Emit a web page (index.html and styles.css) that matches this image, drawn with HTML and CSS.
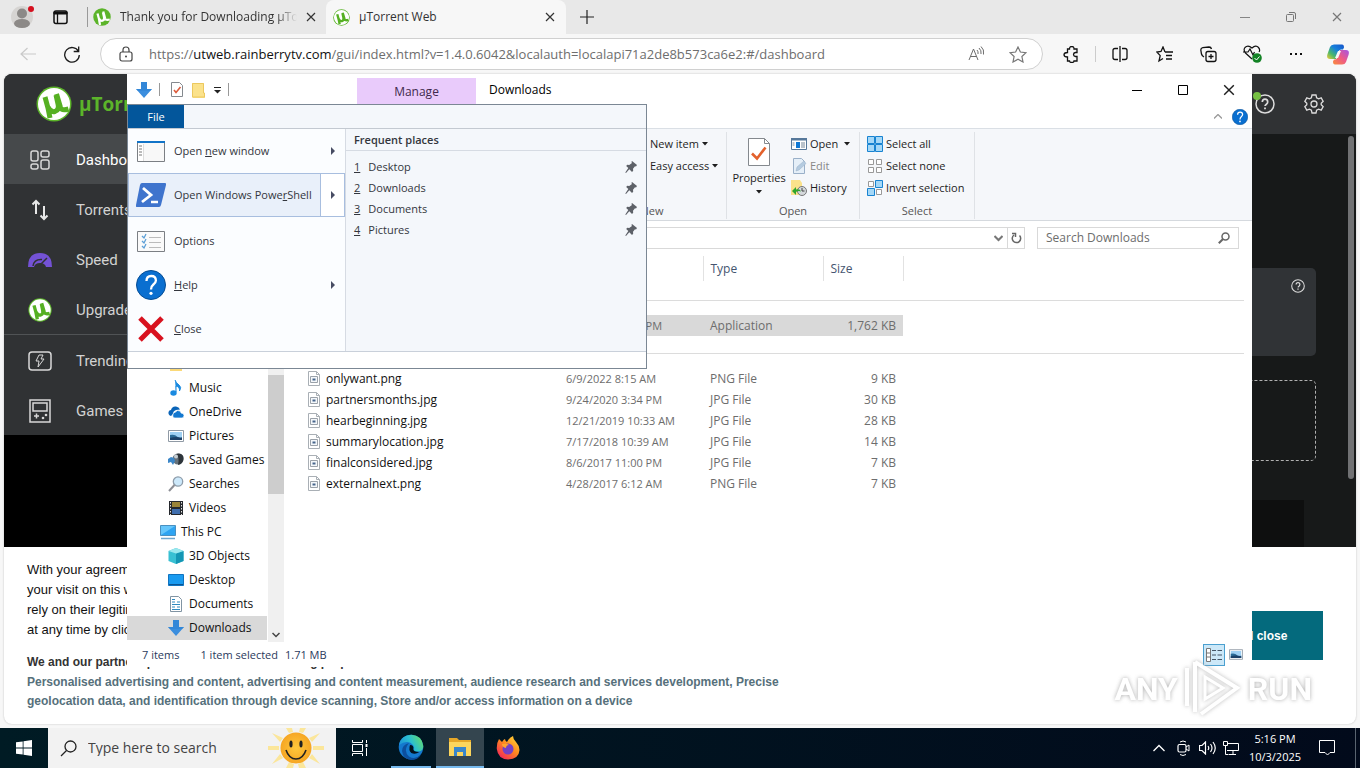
FILE: index.html
```html
<!DOCTYPE html>
<html lang="en">
<head>
<meta charset="utf-8">
<title>Downloads</title>
<link rel="stylesheet" href="styles.css">
</head>
<body>
<svg class="defs" aria-hidden="true">
  <symbol id="ut" viewBox="0 0 36 36"><circle cx="18" cy="18" r="17.500" fill="#5cb42a"/><circle cx="18" cy="18" r="16" fill="#fff"/><path d="M9 11l3 11 2 10M12 21q2.500 5.500 7 4.500 4.500-1.500 3-7.500l-2-9M20.500 8l4 13.500q1.200 3.500 8 1.500" fill="none" stroke="#55b022" stroke-width="5"/></symbol>
  <symbol id="utg" viewBox="0 0 36 36"><circle cx="18" cy="18" r="17.500" fill="#5cb42a"/><path d="M9 11l3 11 2 12M12 21q2.500 5.500 7 4.500 4.500-1.500 3-7.500l-2-9M20.500 7l4 14.500q1.200 3.500 9 1.500" fill="none" stroke="#fff" stroke-width="4.500"/></symbol>
  <symbol id="tabx" viewBox="0 0 10 10"><path d="M1 1l8 8M9 1L1 9" stroke="currentColor" stroke-width="1.200" fill="none"/></symbol>
  <symbol id="down" viewBox="0 0 16 16"><path d="M5 0h6v7h5l-8 9-8-9h5z" fill="#3b8ede"/><path d="M5 0h6v7h5l-2 2H2L0 7h5z" fill="#2f82d4" opacity=".6"/></symbol>
  <symbol id="pin" viewBox="0 0 12 12"><path d="M7 0l5 4-1 1.500-1-.3-2 2.600.2 2L7 11 4.300 8.300 1 12l-.7-.6L3.300 7 1.200 5l1-1.200 2 .1 2.800-2-.6-.9z" fill="#5d6168"/></symbol>
  <symbol id="q" viewBox="0 0 20 20"><circle cx="10" cy="10" r="9" fill="none" stroke="currentColor" stroke-width="1.500"/><path d="M7.300 8q0-2.800 2.700-2.800T12.700 8q0 1.300-1.300 2.200T10 12" fill="none" stroke="currentColor" stroke-width="1.700"/><path d="M9.100 13.500h1.800v1.700H9.100z" fill="currentColor"/></symbol>
  <symbol id="qb" viewBox="0 0 30 30"><circle cx="15" cy="15" r="14.500" fill="#0a6fd0" stroke="#064d94"/><path d="M10.500 11q0-5 4.700-5t4.700 4.500q0 2-2.500 4t-2.400 5" fill="none" stroke="#fff" stroke-width="2.300"/><circle cx="15" cy="23.300" r="1.600" fill="#fff"/></symbol>
  <symbol id="img" viewBox="0 0 12 15"><path d="M.5.5h8l3 3v11H.5z" fill="#fff" stroke="#a9afb5"/><path d="M8.500.5v3h3" fill="none" stroke="#a9afb5"/><path d="M2.500 5.500h7v6h-7z" fill="#f4f7fa" stroke="#9aa1a9"/><path d="M4.500 7.500h3v2h-3z" fill="#47658c"/></symbol>
  <symbol id="caret" viewBox="0 0 6 4"><path d="M0 0h6L3 3.500z" fill="currentColor"/></symbol>
  <symbol id="more" viewBox="0 0 4 8"><path d="M0 0l4 4-4 4z" fill="#474c63"/></symbol>
  <symbol id="pic" viewBox="0 0 16 12"><path d="M.5.5h15v11H.5z" fill="#fff" stroke="#909aa5"/><path d="M2 2h12v8H2z" fill="#9fd0f3"/><path d="M2 5q5-1 7 1.500T14 7v3H2z" fill="#2c6b96"/><path d="M2 8q6-2 12 0v2H2z" fill="#1d4168"/></symbol>
</svg>

<div class="desktop">
<div class="browser">
  <header class="tabstrip">
    <button class="profile" aria-label="Profile"><svg width="24" height="24" viewBox="0 0 24 24"><circle cx="11" cy="12" r="11" fill="#d6d4d2"/><circle cx="11" cy="8.500" r="5" fill="#8c8987"/><ellipse cx="11" cy="18.500" rx="8" ry="4.500" fill="#8c8987"/><circle cx="20" cy="4" r="3" fill="#d5101f"/></svg></button>
    <button class="spaces" aria-label="Tab actions"><svg width="16" height="15" viewBox="0 0 16 15"><rect x="1" y="1" width="13" height="12.500" rx="2" fill="none" stroke="#111" stroke-width="1.500"/><path d="M1 2h13v2H1z" fill="#111" stroke="#111"/><path d="M4.500 4v9" stroke="#111" stroke-width="1.300"/></svg></button>
    <div class="tab"><svg width="18" height="18"><use href="#utg"/></svg><span class="tab-title fade">Thank you for Downloading µTorrent</span><button class="x" aria-label="Close tab"><svg width="10" height="10"><use href="#tabx"/></svg></button></div>
    <div class="tab active"><svg width="17" height="17"><use href="#ut"/></svg><span class="tab-title">µTorrent Web</span><button class="x" aria-label="Close tab"><svg width="10" height="10"><use href="#tabx"/></svg></button></div>
    <button class="newtab" aria-label="New tab"><svg width="14" height="14" viewBox="0 0 14 14"><path d="M7 0v14M0 7h14" stroke="#222" stroke-width="1.200"/></svg></button>
    <div class="wincontrols">
      <button aria-label="Minimize"><svg width="10" height="10" viewBox="0 0 10 10"><path d="M0 5.500h10" stroke="#858585"/></svg></button>
      <button aria-label="Restore"><svg width="10" height="10" viewBox="0 0 10 10"><rect x=".5" y="2.500" width="7" height="7" rx="1" fill="none" stroke="#777"/><path d="M3 .5h5q1.500 0 1.500 1.500v5" fill="none" stroke="#777"/></svg></button>
      <button aria-label="Close"><svg width="10" height="10"><use href="#tabx"/></svg></button>
    </div>
  </header>
  <div class="toolbar">
    <button class="back" aria-label="Back"><svg width="16" height="14" viewBox="0 0 16 14"><path d="M16 7H1M7.500 1L1 7l6.500 6" fill="none" stroke="#c9c9c9" stroke-width="1.200"/></svg></button>
    <button class="reload" aria-label="Refresh"><svg width="18" height="18" viewBox="0 0 18 18"><path d="M15.500 6.500A7.300 7.300 0 1 0 16.300 10M15.700 1.500v5h-5" fill="none" stroke="#1b1b1b" stroke-width="1.300"/></svg></button>
    <div class="urlbar">
      <svg width="14" height="16" viewBox="0 0 14 16"><rect x="1" y="6" width="12" height="9" rx="2" fill="none" stroke="#444" stroke-width="1.200"/><path d="M4 6V4q0-3 3-3t3 3v2" fill="none" stroke="#444" stroke-width="1.200"/><circle cx="7" cy="10.500" r="1" fill="#444"/></svg>
      <span class="url">https://<b>utweb.rainberrytv.com</b>/gui/index.html?v=1.4.0.6042&amp;localauth=localapi71a2de8b573ca6e2:#/dashboard</span>
      <button aria-label="Read aloud"><svg width="17" height="16" viewBox="0 0 17 16"><path d="M1 14L5.500 3 10 14M2.500 10.500h6M9 4q1.500 1.500 1 4M11 2q2.700 2.500 2 6M13 .5q3.500 3 2.500 8" fill="none" stroke="#6d6d6d"/></svg></button>
      <button aria-label="Favorite"><svg width="18" height="17" viewBox="0 0 18 17"><path d="M9 1l2.400 5 5.600.7-4.100 3.800L14 16l-5-2.700L4 16l1.100-5.500L1 6.700 6.600 6z" fill="none" stroke="#777" stroke-width="1.200"/></svg></button>
    </div>
    <div class="actions">
      <button aria-label="Extensions"><svg width="16" height="17" viewBox="0 0 16 17"><path d="M4.500 3h2q0-2.500 2.300-2.500T11 3h3v3.500h-1.500q-2 .3-2 2t2 2H14V15h-3q0 1.500-2.200 1.500T6.500 15h-2v-4Q1 11 1 8.800T4.500 6.500z" fill="none" stroke="#111" stroke-width="1.300"/></svg></button>
      <span class="vr"></span>
      <button aria-label="Split screen"><svg width="16" height="16" viewBox="0 0 16 16"><path d="M8 0v16M6 2.500H3Q1 2.500 1 4.500v7q0 2 2 2h3M10 2.500h3q2 0 2 2v7q0 2-2 2h-3" fill="none" stroke="#111" stroke-width="1.300"/></svg></button>
      <button aria-label="Favorites"><svg width="17" height="17" viewBox="0 0 17 17"><path d="M9 6L7 1 5 5.500.8 6l3.400 3.600L3 15l4-2.500M9 6h8M10 9.500h6M10 13h6" fill="none" stroke="#111" stroke-width="1.300"/></svg></button>
      <button aria-label="Collections"><svg width="17" height="17" viewBox="0 0 17 17"><rect x="6" y="5.500" width="10" height="10" rx="2" fill="none" stroke="#111" stroke-width="1.300"/><path d="M11 8v5M8.500 10.500h5M4 11q-2-1-2.500-3L.8 4q0-2 2-2.300L9 1q2 0 2.500 2" fill="none" stroke="#111" stroke-width="1.300"/></svg></button>
      <button aria-label="Browser essentials"><svg width="19" height="18" viewBox="0 0 19 18"><path d="M9 14L2.500 8Q0 5 2 2.500 5-.5 9 3q4-3.500 6.500-.5 2 2.500.5 4.500M0 7h5l2-3 3 6 1.500-3" fill="none" stroke="#111" stroke-width="1.200"/><circle cx="14" cy="13" r="4.800" fill="#138325"/><path d="M11.500 13l2 2 3-3.500" fill="none" stroke="#fff"/></svg></button>
      <button aria-label="Settings and more"><svg width="14" height="4" viewBox="0 0 14 4"><path d="M1 1h2v2H1zM6 1h2v2H6zM11 1h2v2h-2z" fill="#111"/></svg></button>
      <button class="copilot" aria-label="Copilot"><svg width="22" height="21" viewBox="0 0 22 21"><defs><linearGradient id="cp1" x1="0" y1="1" x2="1" y2="0"><stop offset="0" stop-color="#f3ca34"/><stop offset=".3" stop-color="#4bb86b"/><stop offset=".6" stop-color="#1680dc"/><stop offset="1" stop-color="#1754c9"/></linearGradient><linearGradient id="cp2" x1="0" y1="1" x2="1" y2="0"><stop offset="0" stop-color="#f98c3a"/><stop offset=".5" stop-color="#ee5a86"/><stop offset="1" stop-color="#a355e7"/></linearGradient></defs><path d="M7 .5h8q2 0 2 3l-1 2h-2q-2 0-3 3L9 15H3q-4 0-2.500-5L3 3Q4 .5 7 .5z" fill="url(#cp1)"/><path d="M15 20.500H8q-2 0-2-3l1-2h1q2 0 3-3L13 6h6q4 0 2.500 5L19 18q-1 2.500-4 2.500z" fill="url(#cp2)"/><path d="M11 7h3l-3 7H8z" fill="#f7f7f7"/></svg></button>
    </div>
  </div>

  <main class="page">
    <div class="app">
      <div class="app-head">
        <svg width="36" height="36"><use href="#ut"/></svg><span class="brand">µTorrent</span>
        <span class="head-icons">
          <button class="helpdot" aria-label="Help"><svg width="20" height="20"><use href="#q"/></svg></button>
          <button aria-label="Settings"><svg width="20" height="20" viewBox="0 0 20 20"><path d="M8 1h4l.6 2.700 2 1.100 2.600-.9 2 3.400-2 1.900v1.600l2 1.900-2 3.400-2.600-.9-2 1.100L12 19H8l-.6-2.700-2-1.100-2.600.9-2-3.400 2-1.900V9.200l-2-1.900 2-3.400 2.600.9 2-1.100z" fill="none" stroke="#dcdcdc" stroke-width="1.300"/><circle cx="10" cy="10" r="3" fill="none" stroke="#dcdcdc" stroke-width="1.300"/></svg></button>
        </span>
      </div>
      <div class="app-body">
        <div class="side-col">
        <nav class="side">
          <a href="#dashboard" class="on"><svg width="24" height="22" viewBox="0 0 24 22"><g fill="none" stroke="#d8d8d8" stroke-width="1.500"><rect x="3" y="2" width="7" height="10" rx="2"/><rect x="13" y="2" width="8" height="6" rx="2"/><rect x="3" y="15" width="7" height="5" rx="2"/><rect x="13" y="11" width="8" height="9" rx="2"/></g></svg>Dashboard</a>
          <a href="#torrents"><svg width="24" height="22" viewBox="0 0 24 22"><path d="M8 15V2M4.500 5.500L8 2l3.500 3.500M16 7v13M12.500 16.500L16 20l3.500-3.500" fill="none" stroke="#e8e8e8" stroke-width="2"/></svg>Torrents</a>
          <a href="#speed"><svg width="24" height="22" viewBox="0 0 24 22"><path d="M0 18q0-14 12-14t12 14h-6q-1-4-6-4t-6 4z" fill="#7452d6"/><path d="M11 17l8-8M5 17q1-7 9-6.500" fill="none" stroke="#303234" stroke-width="1.500"/></svg>Speed</a>
          <a href="#upgrade"><svg width="24" height="24"><use href="#ut"/></svg>Upgrade</a>
          <a href="#trending" class="ruled"><svg width="24" height="22" viewBox="0 0 24 22"><rect x="1" y="2" width="22" height="18" rx="3" fill="none" stroke="#d8d8d8" stroke-width="1.500"/><path d="M11 5h4l-2 4h3l-6 8 1-6H8z" fill="none" stroke="#d8d8d8"/></svg>Trending</a>
          <a href="#games"><svg width="24" height="24" viewBox="0 0 24 24"><path d="M2 1h20v22H2zM5 4h14v8H5zM6 17h5M8.500 14.500v5" fill="none" stroke="#d8d8d8" stroke-width="1.500"/><circle cx="15" cy="19" r="1.300" fill="#d8d8d8"/><circle cx="18" cy="16" r="1.300" fill="#d8d8d8"/></svg>Games</a>
        </nav>
        </div>
        <div class="dash">
          <section class="card"><button aria-label="Info"><svg width="14" height="14"><use href="#q"/></svg></button></section>
          <section class="drop"></section>
          <section class="ad"></section>
          <div class="thumb"></div>
        </div>
      </div>
    </div>
    <section class="consent">
      <div class="consent-text">
        <p class="intro">With your agreement,<br>your visit on this website,<br>rely on their legitimate<br>at any time by clicking</p>
        <strong>We and our partners process data for the following purposes:</strong>
        <p class="purposes">Personalised advertising and content, advertising and content measurement, audience research and services development, Precise geolocation data, and identification through device scanning, Store and/or access information on a device</p>
      </div>
      <button class="agree">Agree and close</button>
    </section>
  </main>
</div>

<div class="explorer">
  <div class="ex-title">
    <div class="quick">
      <svg width="16" height="16"><use href="#down"/></svg><i></i>
      <button aria-label="Properties"><svg width="12" height="15" viewBox="0 0 12 15"><path d="M.5.500h8l3 3v11H.5z" fill="#fff" stroke="#84898e"/><path d="M3 8l2 2.500L9.500 5" fill="none" stroke="#dc5b3b" stroke-width="1.600"/></svg></button>
      <button aria-label="New folder"><svg width="13" height="16" viewBox="0 0 13 16"><path d="M0 1h12v10l1 1v4H1l-1-1z" fill="#fbe28b"/><path d="M.5 1.500h11v9.500h1v4h-12z" fill="none" stroke="#ecc85e"/></svg></button>
      <button aria-label="Customize"><svg width="7" height="8" viewBox="0 0 7 8"><path d="M0 1.500h7" stroke="#222"/><path d="M0 4h7L3.500 7.500z" fill="#222"/></svg></button><i></i>
    </div>
    <div class="manage">Manage</div>
    <div class="ex-name">Downloads</div>
    <div class="ex-controls">
      <button aria-label="Minimize"><svg width="10" height="10" viewBox="0 0 10 10"><path d="M0 5.500h10" stroke="#000"/></svg></button>
      <button aria-label="Maximize"><svg width="10" height="10" viewBox="0 0 10 10"><path d="M.5.500h9v9h-9z" fill="none" stroke="#000"/></svg></button>
      <button aria-label="Close"><svg width="12" height="12"><use href="#tabx"/></svg></button>
    </div>
  </div>
  <div class="ex-tabs">
    <button aria-label="Collapse ribbon"><svg width="8" height="5" viewBox="0 0 8 5"><path d="M0 4.500l4-4 4 4" fill="none" stroke="#999" stroke-width="1.300"/></svg></button>
    <button aria-label="Help"><svg width="16" height="16"><use href="#qb"/></svg></button>
  </div>
  <div class="ribbon">
    <div class="group new">
      <div class="cmds stack">
        <button>New item <svg width="6" height="4"><use href="#caret"/></svg></button>
        <button>Easy access <svg width="6" height="4"><use href="#caret"/></svg></button>
      </div>
      <span class="gname">New</span>
    </div>
    <div class="group open">
      <div class="cmds">
        <button class="big"><svg width="22" height="28" viewBox="0 0 22 28"><path d="M.5.500h16l5 5v22H.5z" fill="#fff" stroke="#84898e"/><path d="M16.500.5v5h5" fill="none" stroke="#84898e"/><path d="M4 15.500l5 5 8.500-11" fill="none" stroke="#e3612c" stroke-width="2.600"/></svg>Properties<svg width="6" height="4"><use href="#caret"/></svg></button>
        <div class="stack">
          <button><svg width="16" height="12" viewBox="0 0 16 12"><path d="M.5.500h15v11H.5z" fill="#fff" stroke="#56789a"/><path d="M0 0h16v2.500H0z" fill="#56789a"/><path d="M5 4h4v6H5z" fill="#0f78d4"/><path d="M10 5h4M10 7h4M10 9h4M1.500 5h2M1.500 7h2" stroke="#789"/></svg>Open <svg class="push" width="6" height="4"><use href="#caret"/></svg></button>
          <button class="off"><svg width="16" height="16" viewBox="0 0 16 16"><path d="M2.500.5h8l3 3v12h-11z" fill="#e5eff8" stroke="#9ab0c8"/><path d="M5 13l1-4 7-6 2 2.500-7 6.500z" fill="#b4cbe0" stroke="#9ab0c8" stroke-width=".5"/></svg>Edit</button>
          <button><svg width="16" height="16" viewBox="0 0 16 16"><path d="M0 0h9l2 3v12H0z" fill="#fbe28b"/><circle cx="11" cy="11" r="4.500" fill="#d5d9dc" stroke="#777"/><path d="M11 8v3h2.500" fill="none" stroke="#444"/><path d="M1 11l4-4v2.500q4-1 5 2-3-1-5 .5V15z" fill="#2fa52c"/></svg>History</button>
        </div>
      </div>
      <span class="gname">Open</span>
    </div>
    <div class="group select">
      <div class="cmds stack">
        <button><svg width="16" height="16" viewBox="0 0 16 16"><path d="M.5.500h7v7h-7zM8.500.500h7v7h-7zM.5 8.500h7v7h-7zM8.500 8.500h7v7h-7z" fill="#a5d8f7" stroke="#1883d1"/></svg>Select all</button>
        <button><svg width="16" height="16" viewBox="0 0 16 16"><path d="M1.500 1.500h5v5h-5zM9.500 1.500h5v5h-5zM1.500 9.500h5v5h-5zM9.500 9.500h5v5h-5z" fill="#fff" stroke="#999"/></svg>Select none</button>
        <button><svg width="16" height="16" viewBox="0 0 16 16"><path d="M1.500 1.500h5v5h-5zM9.500 9.500h5v5h-5z" fill="#fff" stroke="#999"/><path d="M8.500.500h7v7h-7zM.5 8.500h7v7h-7z" fill="#a5d8f7" stroke="#1883d1"/></svg>Invert selection</button>
      </div>
      <span class="gname">Select</span>
    </div>
  </div>
  <div class="address">
    <div class="path"><button aria-label="Previous locations"><svg width="9" height="7" viewBox="0 0 9 7"><path d="M.5 1l4 4 4-4" fill="none" stroke="#777" stroke-width="2"/></svg></button><button class="refresh" aria-label="Refresh"><svg width="11" height="12" viewBox="0 0 11 12"><path d="M8.500 3.500A4.200 4.200 0 1 1 3 3M1 1.500h3.500V5" fill="none" stroke="#666" stroke-width="1.500"/></svg></button></div>
    <label class="find"><input type="text" placeholder="Search Downloads" aria-label="Search Downloads"><svg width="12" height="12" viewBox="0 0 12 12"><circle cx="7.500" cy="4.500" r="3.500" fill="none" stroke="#666" stroke-width="1.500"/><path d="M5 7L.8 11.300" stroke="#666" stroke-width="2"/></svg></label>
  </div>
  <div class="ex-body">
    <nav class="tree">
      <ul>
        <li><svg width="16" height="14" viewBox="0 0 16 14"><path d="M2 0h12v14H2z" fill="#fbd978"/></svg></li>
        <li><svg width="16" height="16" viewBox="0 0 16 16"><path d="M7 0q1 3 4 5t.5 6q.5-4-3.500-5v6" fill="#1a8ae0" stroke="#1a8ae0"/><ellipse cx="5.500" cy="13" rx="3.200" ry="2.700" fill="#1a8ae0"/></svg>Music</li>
        <li><svg width="16" height="16" viewBox="0 0 16 16"><path d="M3 12q-3-1-2.500-4Q1 6 3 6q1-4 5-3.500 3 .5 4 3L8 6q-3 1-3 4z" fill="#0a64b8"/><path d="M5 13q-1-4 2.500-5Q9 5.500 12 7q1 1 1 2 3 0 3 2.500T14 14H7q-2 0-2-1z" fill="#1378d0" stroke="#fff" stroke-width=".7"/></svg>OneDrive</li>
        <li><svg width="16" height="12"><use href="#pic"/></svg>Pictures</li>
        <li><svg width="16" height="16" viewBox="0 0 16 16"><circle cx="10" cy="7" r="5.500" fill="#66727b"/><path d="M8 2q4 3 2 11 5-1 5.500-6T11 1.500z" fill="#2e353b"/><path d="M0 7l3-2 3 1 1 3-2 4-2-3-3 1z" fill="#3c87c8"/><circle cx="8" cy="4.500" r="2" fill="#c7cfd5"/></svg>Saved Games</li>
        <li><svg width="16" height="16" viewBox="0 0 16 16"><circle cx="10" cy="5.500" r="4.700" fill="#cde9fb" stroke="#8e9dab" stroke-width="1.300"/><path d="M6.500 9L1 15" stroke="#8d8f96" stroke-width="2"/></svg>Searches</li>
        <li><svg width="16" height="16" viewBox="0 0 16 16"><path d="M1 1h14v14H1z" fill="#25282d"/><path d="M4 2h8v5H4z" fill="#9a8438"/><path d="M4 9h8v5H4z" fill="#3f6eae"/><path d="M2.500 2v13M13.500 2v13" stroke="#e3e3e3" stroke-dasharray="1.500 1.500"/></svg>Videos</li>
        <li class="root"><svg width="16" height="16" viewBox="0 0 16 16"><path d="M.5 1.500h15v10H.5z" fill="#2ea4f2" stroke="#4a90c0"/><path d="M1 2h14L1 11z" fill="#66c6fb"/><path d="M1 14.500h14" stroke="#6fa7cf" stroke-width="1.500"/></svg>This PC</li>
        <li><svg width="16" height="16" viewBox="0 0 16 16"><path d="M8 0l7.500 3v10L8 16 .5 13V3z" fill="#38c0d3"/><path d="M8 5.500l7.500-2.500v10L8 16z" fill="#1496b4"/><path d="M8 0l7.500 3L8 5.500.5 3z" fill="#9be8ee"/></svg>3D Objects</li>
        <li><svg width="16" height="14" viewBox="0 0 16 14"><path d="M.5 1.500h15v11H.5z" fill="#1a9bf0" stroke="#1174c0"/><path d="M1 11.500h14" stroke="#0b5594"/></svg>Desktop</li>
        <li><svg width="16" height="16" viewBox="0 0 16 16"><path d="M2.500.5h8l3 3v12h-11z" fill="#fff" stroke="#8194a3"/><path d="M4 3.500h3M4 6h3M9 6h3M4 8.500h8M4 11h3M9 11h3M4 13.500h8" stroke="#2f8abf"/></svg>Documents</li>
        <li class="sel"><svg width="16" height="16"><use href="#down"/></svg>Downloads</li>
      </ul>
      <div class="scroll"><div class="knob"></div><button aria-label="Scroll down"><svg width="8" height="6" viewBox="0 0 8 6"><path d="M.5 1L4 4.500 7.500 1" fill="none" stroke="#444" stroke-width="1.500"/></svg></button></div>
    </nav>
    <div class="list">
      <table>
        <colgroup><col class="c-name"><col class="c-date"><col class="c-type"><col class="c-size"><col></colgroup>
        <thead><tr><th></th><th></th><th>Type</th><th>Size</th><td></td></tr></thead>
        <tbody>
          <tr class="rule"><td colspan="5"><hr></td></tr>
          <tr class="picked"><td></td><td>10/3/2025 5:15 PM</td><td>Application</td><td>1,762 KB</td><td></td></tr>
          <tr class="rule second"><td colspan="5"><hr></td></tr>
          <tr><td><svg width="12" height="15"><use href="#img"/></svg>onlywant.png</td><td>6/9/2022 8:15 AM</td><td>PNG File</td><td>9 KB</td><td></td></tr>
          <tr><td><svg width="12" height="15"><use href="#img"/></svg>partnersmonths.jpg</td><td>9/24/2020 3:34 PM</td><td>JPG File</td><td>30 KB</td><td></td></tr>
          <tr><td><svg width="12" height="15"><use href="#img"/></svg>hearbeginning.jpg</td><td>12/21/2019 10:33 AM</td><td>JPG File</td><td>28 KB</td><td></td></tr>
          <tr><td><svg width="12" height="15"><use href="#img"/></svg>summarylocation.jpg</td><td>7/17/2018 10:39 AM</td><td>JPG File</td><td>14 KB</td><td></td></tr>
          <tr><td><svg width="12" height="15"><use href="#img"/></svg>finalconsidered.jpg</td><td>8/6/2017 11:00 PM</td><td>JPG File</td><td>7 KB</td><td></td></tr>
          <tr><td><svg width="12" height="15"><use href="#img"/></svg>externalnext.png</td><td>4/28/2017 6:12 AM</td><td>PNG File</td><td>7 KB</td><td></td></tr>
        </tbody>
      </table>
    </div>
  </div>
  <footer class="status">
    <span>7 items</span><span>1 item selected</span><span class="size">1.71 MB</span>
    <span class="views"><button class="on" aria-label="Details view"><svg width="16" height="14" viewBox="0 0 16 14"><path d="M.5.500h4v13h-4zM.5 5h4M.5 9h4" fill="#fff" stroke="#777"/><path d="M6 2.500h4M11.500 2.500H16M6 7h4M11.500 7H16M6 11.500h4M11.500 11.500H16" stroke="#456"/></svg></button><button aria-label="Large icons view"><svg width="14" height="11"><use href="#pic"/></svg></button></span>
  </footer>

  <div class="filemenu">
    <div class="fm-tabs"><button>File</button></div>
    <div class="fm-body">
      <div class="fm-left">
        <button><svg width="30" height="30" viewBox="0 0 30 30"><path d="M1.500 5.500h27v20h-27z" fill="#f8f8f8" stroke="#7b7f84"/><path d="M1 5h28v2H1z" fill="#1173c7"/><path d="M2 8h5v17H2z" fill="#fff"/><path d="M3 10h3M3 13h3M3 16h3M3 19h3" stroke="#777"/><path d="M7.500 8v17" stroke="#ddd"/></svg><span>Open <u>n</u>ew window</span><svg class="arr" width="4" height="8"><use href="#more"/></svg></button>
        <button class="hot"><svg width="30" height="30" viewBox="0 0 30 30"><path d="M6 3h23q1.500 0 1 2l-5 20q-.5 2-2 2H1q-1.500 0-1-2L4 5q.5-2 2-2z" fill="#3f74cd"/><path d="M7 8l8 7-9 7" fill="none" stroke="#fff" stroke-width="2.800"/><path d="M15 22h7" stroke="#fff" stroke-width="2.500"/></svg><span>Open Windows Powe<u>r</u>Shell</span><span class="split"><svg width="4" height="8"><use href="#more"/></svg></span></button>
        <button class="gap"><svg width="30" height="30" viewBox="0 0 30 30"><path d="M1.500 5.500h27v20h-27z" fill="#fafafa" stroke="#7b7f84"/><path d="M13 11.500h12M13 16.500h12M13 21.500h12" stroke="#bbb"/><path d="M6 10l2 2 2-4M6 15l2 2 2-4M6 20l2 2 2-4" fill="none" stroke="#5c9fd6" stroke-width="1.300"/></svg><span>Options</span></button>
        <button><svg width="30" height="30"><use href="#qb"/></svg><span><u>H</u>elp</span><svg class="arr" width="4" height="8"><use href="#more"/></svg></button>
        <button><svg width="30" height="30" viewBox="0 0 30 30"><path d="M4 4l22 22M26 4L4 26" stroke="#d8121f" stroke-width="5"/></svg><span><u>C</u>lose</span></button>
      </div>
      <div class="fm-right">
        <h2>Frequent places</h2>
        <ul>
          <li><u>1</u><a href="#desktop">Desktop</a><svg width="12" height="12"><use href="#pin"/></svg></li>
          <li><u>2</u><a href="#downloads">Downloads</a><svg width="12" height="12"><use href="#pin"/></svg></li>
          <li><u>3</u><a href="#documents">Documents</a><svg width="12" height="12"><use href="#pin"/></svg></li>
          <li><u>4</u><a href="#pictures">Pictures</a><svg width="12" height="12"><use href="#pin"/></svg></li>
        </ul>
      </div>
    </div>
    <div class="fm-foot"></div>
  </div>
</div>

<div class="watermark"><span>ANY</span><svg width="60" height="66" viewBox="0 0 60 66"><path d="M4 12v38M12 6v50M12 6l42 26-36 26" fill="none" stroke="#fff" stroke-width="4"/><path d="M22 21v22l18-11z" fill="none" stroke="#fff" stroke-width="3"/></svg><span>RUN</span></div>

<footer class="taskbar">
  <button class="start" aria-label="Start"><svg width="16" height="16" viewBox="0 0 16 16"><path d="M0 2.300L6.700 1.400v6.200H0zM7.500 1.300L16 0v7.600H7.500zM0 8.400h6.700v6.200L0 13.700zM7.500 8.400H16V16l-8.500-1.300z" fill="#fff"/></svg></button>
  <label class="search"><svg width="17" height="17" viewBox="0 0 17 17"><circle cx="10.500" cy="6.500" r="5.500" fill="none" stroke="#222" stroke-width="1.300"/><path d="M6.500 10.500L1 16" stroke="#222" stroke-width="1.300"/></svg><input type="text" placeholder="Type here to search" aria-label="Type here to search">
    <svg width="60" height="40" viewBox="0 0 60 40"><defs><radialGradient id="sun"><stop offset="0" stop-color="#ffc83c"/><stop offset="1" stop-color="#f6a623"/></radialGradient></defs><g fill="#fbe69a"><path d="M2 18h11v4H2zM58 18H47v4h11zM6 5l11 5-3 4zM54 5l-11 5 3 4zM6 36l8-10 3 4zM54 36l-8-10-3 4zM20 0h6l1 4-4 1zM34 0h6l-3 5-4-1zM20 40l3-6 5 2-1 4zM40 40l-3-6-5 2 1 4z"/></g><circle cx="30" cy="20" r="15.500" fill="url(#sun)"/><ellipse cx="25" cy="16" rx="1.600" ry="3.500" fill="#222"/><ellipse cx="35" cy="16" rx="1.600" ry="3.500" fill="#222"/><path d="M20 22q3 9 10 9t10-9" fill="none" stroke="#222" stroke-width="1.600"/></svg></label>
  <button class="item" aria-label="Task view"><svg width="16" height="16" viewBox="0 0 16 16"><path d="M.5 4.500h10v7H.5zM.5 0v2.500h10V0M.5 16v-2.500h10V16M14.500 0v3M14.500 8v8" fill="none" stroke="#fff"/><path d="M13.500 4h2v3h-2z" fill="#fff"/></svg></button>
  <button class="item edge run" aria-label="Microsoft Edge"><svg width="26" height="26" viewBox="0 0 26 26"><defs><linearGradient id="e1" x1="0" y1=".6" x2="1" y2=".2"><stop offset="0" stop-color="#1b8fd8"/><stop offset=".5" stop-color="#2bc0cf"/><stop offset="1" stop-color="#68de66"/></linearGradient></defs><circle cx="13" cy="13" r="12.300" fill="#1479ce"/><path d="M1 11Q3 1 13.500.8 24 1.500 25.300 12q0 5-5 5.500-5 .2-5-2 1.500-2 0-4Q10 5 1 11z" fill="url(#e1)"/><path d="M9 12q-3 6 2 10.500 6 4 12-2-3 5.500-10 5.500Q5 25 4 17q0-6 7-8z" fill="#0c4f9e"/><path d="M12 11q4 0 3.300 4 0 3 6 3-4 3-8 1-3-3-1.300-8z" fill="#02131d"/></svg></button>
  <button class="item run cur" aria-label="File Explorer"><svg width="22" height="18" viewBox="0 0 22 18"><path d="M0 0h8l2 2h12v16H0z" fill="#e6a728"/><path d="M0 4h22v14H0z" fill="#fcd55c"/><path d="M5 9h12v9h-3v-4H8v4H5z" fill="#3a86c9"/></svg></button>
  <button class="item" aria-label="Firefox"><svg width="24" height="24" viewBox="0 0 24 24"><defs><linearGradient id="ff" x1="1" y1="0" x2=".2" y2="1"><stop offset="0" stop-color="#ffe23c"/><stop offset=".5" stop-color="#ff8a1e"/><stop offset="1" stop-color="#f4235c"/></linearGradient></defs><path d="M3 3l3 3q2-3 3-3 0 2 2 3 2-4 6-6 0 3 3 6t3.500 8Q23 23 12 23.500 2 23 .8 13 .5 7 3 3z" fill="url(#ff)"/><circle cx="12" cy="13" r="5.500" fill="#7541c5"/><path d="M6 8q5-1 7 1-3 0-3 3-4-1-4-4z" fill="#ffa52e"/></svg></button>
  <div class="tray">
    <button aria-label="Hidden icons"><svg width="12" height="8" viewBox="0 0 12 8"><path d="M.5 7L6 1.500 11.500 7" fill="none" stroke="#fff" stroke-width="1.300"/></svg></button>
    <button aria-label="Meet now"><svg width="13" height="16" viewBox="0 0 13 16"><rect x="1" y="4.500" width="8" height="7.500" rx="1.500" fill="none" stroke="#fff" stroke-width="1.200"/><path d="M9 7l3-2v6l-3-2M3 2q3-2 6 0M3 14.500q3 2 6 0" fill="none" stroke="#fff"/></svg></button>
    <button aria-label="Volume"><svg width="17" height="14" viewBox="0 0 17 14"><path d="M.5 4.500H3L6.500 1v12L3 9.500H.5zM9 5q1.500 2 0 4M11.500 3q3 4 0 8M14 1q4.500 6 0 12" fill="none" stroke="#fff" stroke-width="1.200"/></svg></button>
    <button aria-label="Network"><svg width="16" height="14" viewBox="0 0 16 14"><path d="M5 2.500h10.500v7H4M10 10v3M6 13.500h7M.5.500h4v4h-4zM2.500 4.500v9h3" fill="none" stroke="#fff"/></svg></button>
    <div class="clock"><span>5:16 PM</span><span>10/3/2025</span></div>
    <button class="note" aria-label="Notifications"><svg width="16" height="16" viewBox="0 0 16 16"><path d="M.5.500h15v12H11L8.500 15 6 12.500H.5z" fill="none" stroke="#fff"/></svg></button>
    <span class="peek"></span>
  </div>
</footer>
</div>
</body>
</html>
```
FILE: styles.css
```css
* { box-sizing: border-box; }
body { margin: 0; font: 12px/16px "Open Sans", "Noto Sans", sans-serif; color: #1e1e1e; }
button { background: none; border: 0; padding: 0; margin: 0; font: inherit; color: inherit; display: flex; align-items: center; justify-content: center; }
input { border: 0; background: none; font: inherit; padding: 0; min-width: 0; outline: 0; }
ul { list-style: none; margin: 0; padding: 0; }
a { color: inherit; text-decoration: none; }
svg { flex: none; display: block; }
.defs { position: absolute; width: 0; height: 0; }

.desktop { height: 100vh; display: flex; flex-direction: column; position: relative; overflow: hidden; }
.browser { flex: 1; min-height: 0; display: flex; flex-direction: column; background: #f7f7f7; }

/* tab strip */
.tabstrip { height: 34px; flex: none; display: flex; align-items: center; background: #e8e8e8; }
.profile { margin-left: 11px; width: 24px; }
.spaces { margin-left: 18px; width: 16px; }
.tab { width: 239px; height: 34px; display: flex; align-items: center; gap: 9px; padding: 0 10px 0 5px; margin-left: 18px; color: #333; }
.tab:not(.active)::before { content: ""; width: 1px; height: 20px; background: #999; margin-right: -4px; margin-left: -5px; }
.tab.active { margin-left: 0; width: 240px; padding: 0 11px 0 7px; background: #f7f7f7; border-radius: 8px 8px 0 0; }
.tab-title { flex: 1; white-space: nowrap; overflow: hidden; }
.fade { -webkit-mask-image: linear-gradient(90deg, #000 88%, transparent); mask-image: linear-gradient(90deg, #000 88%, transparent); }
.newtab { width: 42px; height: 34px; }
.wincontrols { margin-left: auto; display: flex; color: #777; }
.wincontrols button { width: 46px; height: 34px; }

/* address bar */
.toolbar { height: 40px; flex: none; display: flex; align-items: center; padding: 0 2px 0 20px; }
.reload { margin: 0 19px 0 27px; }
.urlbar { flex: 1; height: 32px; border: 1px solid #d0d0d0; border-radius: 16px; background: #fff; display: flex; align-items: center; padding: 0 15px 0 18px; gap: 24px; }
.url { flex: 1; margin-left: -8px; font-size: 13px; line-height: 20px; color: #6e6e6e; white-space: nowrap; overflow: hidden; }
.url b { font-weight: 400; color: #111; }
.actions { display: flex; align-items: center; margin-left: 6px; }
.actions button { width: 44px; height: 32px; }
.actions .copilot { width: 40px; }
.vr { width: 1px; height: 16px; margin: 0 2px; background: #ccc; }

/* web page */
.page { flex: 1; min-height: 0; margin: 0 4px 4px; border-radius: 8px; overflow: hidden; background: #fff; display: flex; flex-direction: column; box-shadow: 0 0 2px #bbb; }
.app { flex: 1; min-height: 0; display: flex; flex-direction: column; background: #171919; }
.app-head { height: 60px; flex: none; background: #303234; display: flex; align-items: center; padding: 0 32px; gap: 7px; color: #dcdcdc; }
.brand { font: bold 19px/28px "Open Sans", sans-serif; color: #5cb42a; }
.head-icons { margin-left: auto; display: flex; gap: 29px; }
.helpdot { position: relative; }
.helpdot::before { content: ""; position: absolute; left: -2px; top: -2px; width: 8px; height: 8px; border-radius: 50%; background: #76c043; }
.app-body { flex: 1; min-height: 0; display: flex; }
.side-col { width: 200px; flex: none; background: #000; }
.side { background: #303234; }
.side a { height: 50px; display: flex; align-items: center; gap: 24px; padding: 1px 0 0 24px; font: 15px/20px Roboto, sans-serif; color: #d2d2d2; }
.side a.on { background: #46494b; color: #fff; }
.side a.ruled { height: 51px; border-top: 1px solid #505355; }
.dash { flex: 1; position: relative; padding: 134px 40px 0; display: flex; flex-direction: column; }
.card { height: 88px; flex: none; background: #303336; border-radius: 5px; display: flex; justify-content: flex-end; align-items: flex-start; padding: 11px; color: #dcdcdc; }
.drop { height: 81px; flex: none; margin-top: 24px; border: 1px dashed #b0b0b0; border-radius: 5px; }
.ad { flex: 1; margin: 39px 12px 0; background: #0e0f0f; }
.thumb { position: absolute; right: 2px; top: 2px; width: 6px; height: 343px; border-radius: 3px; background: #707173; }
.consent { flex: none; display: flex; align-items: center; justify-content: space-between; padding: 13px 33px 13px 23px; font: 12px/20px "Liberation Sans", Arial, sans-serif; color: #111; }
.consent-text { width: 770px; }
.consent p { margin: 0; }
.consent .intro { font-size: 13px; }
.consent strong { display: block; margin-top: 12px; color: #333; }
.consent .purposes { margin-top: 1px; font-weight: bold; line-height: 19px; color: #56707b; }
.agree { width: 164px; height: 49px; background: #046a7d; color: #fff; font-weight: bold; }

/* explorer window */
.explorer { position: absolute; inset: 74px 108px 101px 127px; background: #fff; display: flex; flex-direction: column; overflow: hidden; }
.ex-title { height: 31px; flex: none; display: flex; align-items: center; }
.quick { width: 230px; display: flex; align-items: center; gap: 9px; padding-left: 9px; }
.quick i { width: 1px; height: 13px; background: #999; margin: 0 2px 0 -2px; }
.manage { width: 119px; height: 27px; align-self: flex-end; background: #e9cbfb; text-align: center; line-height: 27px; color: #3f2a4c; }
.ex-name { margin-left: 13px; color: #000; }
.ex-controls { margin-left: auto; display: flex; }
.ex-controls button { width: 46px; height: 30px; }
.ex-tabs { height: 23px; flex: none; display: flex; align-items: center; justify-content: flex-end; gap: 10px; padding-right: 4px; }
.ribbon { height: 93px; flex: none; border-top: 1px solid #dadfe5; border-bottom: 1px solid #d5d9de; background: #f5f7fa; display: flex; padding-left: 451px; font-size: 11px; }
.group { display: flex; flex-direction: column; margin: 3px 0 1px; padding-top: 1px; border-right: 1px solid #dfe2e6; align-items: center; justify-content: space-between; }
.gname { color: #555; }
.cmds { display: flex; align-items: flex-start; }
.stack { display: flex; flex-direction: column; align-items: flex-start; }
.stack button { height: 22px; gap: 3px; white-space: nowrap; }
.group.new { width: 149px; }
.new .cmds { align-self: flex-end; width: 76px; }
.group.open { width: 133px; }
.open .cmds { align-self: stretch; gap: 4px; padding-left: 4px; }
.big { flex-direction: column; gap: 4px; padding-top: 5px; width: 56px; }
.push { margin-left: 3px; }
.off { color: #888; }
.group.select { width: 115px; }
.select .cmds { align-self: stretch; padding-left: 7px; }
.address { height: 33px; flex: none; display: flex; align-items: center; gap: 12px; padding: 1px 13px 0 100px; }
.path { flex: 1; height: 22px; border: 1px solid #d9d9d9; display: flex; justify-content: flex-end; }
.path button { width: 17px; }
.path .refresh { border-left: 1px solid #d9d9d9; }
.find { width: 202px; height: 22px; border: 1px solid #d9d9d9; display: flex; align-items: center; padding: 0 8px; }
.find input { flex: 1; }
.find input::placeholder { color: #6d6d6d; opacity: 1; }
.ex-body { flex: 1; min-height: 0; display: flex; }
.tree { width: 157px; flex: none; display: flex; align-items: flex-end; justify-content: space-between; }
.tree ul { width: 140px; padding-bottom: 2px; }
.tree li { height: 24px; display: flex; align-items: center; gap: 5px; padding-left: 41px; color: #111; white-space: nowrap; }
.tree li.root { padding-left: 33px; }
.tree li.sel { background: #d9d9d9; }
.scroll { width: 16px; height: 274px; background: #f0f0f0; display: flex; flex-direction: column; justify-content: space-between; }
.knob { height: 126px; border-top: 7px solid #f0f0f0; background: #cdcdcd; }
.scroll button { height: 15px; }
.list { flex: 1; padding: 2px 8px 0 16px; }
table { width: 100%; table-layout: fixed; border-collapse: collapse; color: #6d6d6d; }
.c-name { width: 259px; }
.c-date { width: 144px; }
.c-type { width: 120px; }
.c-size { width: 80px; }
th, td { padding: 0 0 0 7px; height: 21px; text-align: left; white-space: nowrap; }
th { height: 25px; font-weight: 400; color: #44546f; border-right: 1px solid #e2e2e2; }
td:first-child { padding-left: 8px; color: #111; }
tbody td:nth-child(2) { font-size: 11px; }
tbody td:nth-child(4) { text-align: right; padding-right: 7px; }
td svg { display: inline-block; vertical-align: -3px; margin-right: 6px; }
.rule td { height: 34px; padding: 0; }
.rule.second td { height: 32px; }
.rule hr { border: 0; border-top: 1px solid #dcdcdc; margin: 4px 0 0; }
.rule.second hr { margin: 2px 0 0; }
.picked td:nth-child(-n+4) { background: #d9d9d9; }
.status { height: 25px; flex: none; display: flex; align-items: center; padding: 0 5px 0 15px; gap: 21px; font-size: 11px; color: #2b3a5c; }
.status .size { margin-left: -14px; }
.views { margin-left: auto; display: flex; }
.views button { width: 22px; height: 22px; }
.views .on { background: #cce8f8; border: 1px solid #4ba0d0; }

/* file menu */
.filemenu { position: absolute; left: 0; top: 30px; width: 520px; border: 1px solid #7b8794; background: #fff; color: #33363d; font-size: 11px; }
.fm-tabs { height: 24px; background: #f4f7fb; border-bottom: 1px solid #c3c9d1; display: flex; }
.fm-tabs button { width: 56px; background: #03569b; color: #fff; }
.fm-body { display: flex; }
.fm-left { width: 218px; background: #fbfdff; border-right: 1px solid #d6dbe3; }
.fm-left button { width: 217px; height: 44px; justify-content: flex-start; gap: 8px; padding: 0 9px 0 7px; white-space: nowrap; border: 1px solid transparent; }
.fm-left .arr { margin-left: auto; }
.fm-left .hot { background: #e9f0fa; border-color: #a8bedf; padding-right: 0; }
.split { margin-left: auto; width: 24px; flex: none; align-self: stretch; border-left: 1px solid #a8bedf; background: #fff; display: flex; align-items: center; justify-content: center; }
.fm-left .gap { margin-top: 2px; }
.fm-right { flex: 1; background: #f4f7fb; }
.fm-right h2 { margin: 0; height: 22px; padding-left: 8px; border-bottom: 1px solid #d6dbe3; font-size: 11px; line-height: 22px; font-weight: 600; }
.fm-right ul { padding: 5px 9px 0 8px; }
.fm-right li { display: flex; align-items: center; height: 21px; gap: 8px; }
.fm-right li svg { margin-left: auto; }
.fm-foot { height: 17px; border-top: 1px solid #c9d0da; }

.watermark { position: absolute; right: 48px; bottom: 46px; display: flex; align-items: center; gap: 5px; opacity: .8; font: bold 32px/40px Roboto, sans-serif; color: #fff; text-shadow: 0 0 4px #999; }
.watermark svg { filter: drop-shadow(0 0 2px #aaa); }

/* taskbar */
.taskbar { height: 40px; flex: none; display: flex; background: linear-gradient(90deg, #001b24, #020a1b); color: #fff; }
.start { width: 48px; }
.search { width: 288px; background: #f2f2f2; display: flex; align-items: center; padding: 0 10px 0 12px; gap: 11px; }
.search input { flex: 1; font-size: 14px; }
.search input::placeholder { color: #444; opacity: 1; }
.item { width: 48px; height: 40px; }
.run { border-bottom: 2px solid #76b9ed; }
.edge.run { width: 40px; margin: 0 5px 0 7px; }
.cur { background: #34454f; }
.tray { margin-left: auto; display: flex; align-items: center; }
.tray button { width: 24px; height: 40px; }
.clock { width: 64px; display: flex; flex-direction: column; align-items: center; font-size: 11px; line-height: 18px; }
.tray .note { width: 40px; }
.peek { width: 5px; height: 40px; margin-left: 8px; border-left: 1px solid #5a6470; }
```
